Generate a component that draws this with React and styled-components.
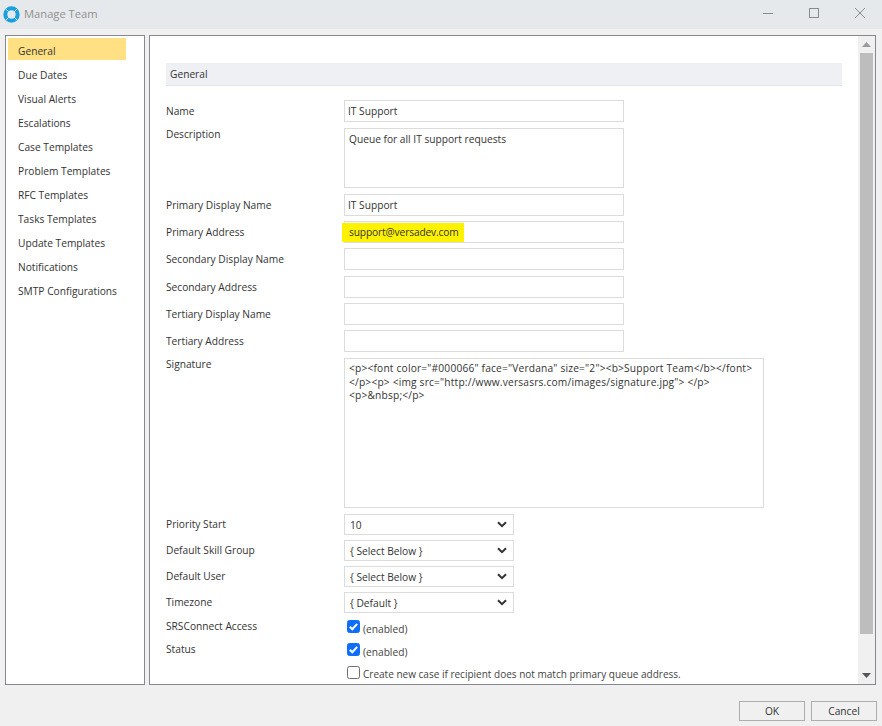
import React from "react";
import styled, { createGlobalStyle } from "styled-components";

const Global = createGlobalStyle`
  html, body { margin: 0; padding: 0; background: #f0f0f0; }
  * { box-sizing: border-box; }
`;

const Window = styled.div`
  width: 882px; height: 726px; display: flex; flex-direction: column;
  background: #f0f0f0; color: #333; overflow: hidden;
  font-family: "Open Sans", "Noto Sans", sans-serif; font-size: 10.2px;
`;
const TitleBar = styled.header`
  height: 29px; flex: none; display: flex; align-items: center; padding-left: 3px;
  background: #e6e9ec;
`;
const TitleText = styled.span`
  margin-left: 4px; color: #909090; font-size: 11.2px; flex: 1; padding-bottom: 3px;
`;
const WinButton = styled.button`
  width: 46px; height: 28px; border: 0; background: none; padding: 0 0 0 2px;
  display: flex; align-items: center; justify-content: center; margin-bottom: 3px;
`;
const Main = styled.main`
  height: 651px; flex: none; margin-top: 6px; padding: 0 6px 0 5px; display: flex; gap: 4px;
`;
const SideNav = styled.nav`
  width: 140px; flex: none; background: #fff; border: 1px solid #87878f; padding: 2px;
  display: flex; flex-direction: column; height: 650px;
`;
const NavItem = styled.div`
  width: 118px; height: 22px; flex: none; margin-bottom: 2px; padding: 2px 0 0 10px;
  line-height: 22px; white-space: nowrap;
  background: ${(p) => (p.$active ? "#ffe083" : "transparent")};
`;
const Panel = styled.section`
  flex: 1; height: 650px; display: flex; background: #fff; border: 1px solid #87878f; min-width: 0;
`;
const Form = styled.div`
  flex: 1; padding: 27px 16px 0 16px; min-width: 0; overflow: hidden;
`;
const SectionHead = styled.div`
  height: 23px; background: #eff0f4; border-bottom: 1px solid #e3e4e8;
  padding-left: 4px; line-height: 22px; margin-bottom: 14px;
`;
const Row = styled.div`
  display: grid; grid-template-columns: 178px 1fr; height: ${(p) => p.$pitch}px;
`;
const Label = styled.div`
  margin-top: ${(p) => p.$top ?? 4}px; line-height: 15px; white-space: nowrap;
`;
const Field = styled.div`
  width: ${(p) => p.$w || 280}px; height: ${(p) => p.$h || 22}px;
  border: 1px solid #dcdcdc; background: #fff; padding: ${(p) => (p.$multi ? "3px 4px" : "0 3px")};
  line-height: 20px; color: #333;
`;
const MultiText = styled.div`
  line-height: ${(p) => p.$lh}px; letter-spacing: ${(p) => p.$ls || 0}px; white-space: nowrap;
`;
const Marked = styled.span`
  display: inline-block; height: 19px; line-height: 18px; margin: 1px 0 0 -6px; padding: 0 5px 0 7px;
  background: #fff200; vertical-align: top; letter-spacing: -0.13px;
`;
const Select = styled.div`
  width: 170px; height: 21px; border: 1px solid #dcdcdc; background: #fff;
  display: flex; align-items: center; justify-content: space-between; padding: 0 6px 0 5px; color: #333;
`;
const CheckCell = styled.div`
  display: flex; align-items: flex-start; gap: 3px; padding-left: 3px; white-space: nowrap;
`;
const Box = styled.span`
  width: 13px; height: 13px; flex: none; border-radius: 2.5px;
  display: flex; align-items: center; justify-content: center;
  background: ${(p) => (p.$on ? "#0d6efd" : "#fff")};
  border: 1px solid ${(p) => (p.$on ? "#0d6efd" : "#6f6f6f")};
`;
const CheckText = styled.span`
  line-height: 15px; padding-top: ${(p) => p.$top}px; color: #444;
  font-size: ${(p) => p.$size || 10.2}px;
`;
const ScrollBar = styled.div`
  width: 17px; flex: none; background: #f0f0f0; display: flex; flex-direction: column; align-items: center;
`;
const Arrow = styled.div`
  height: 17px; flex: none; width: 100%; display: flex; align-items: center; justify-content: center;
`;
const Thumb = styled.div`
  width: 13px; height: 581px; flex: none; background: #bdbdbd;
`;
const Spacer = styled.div` flex: 1; `;
const Footer = styled.footer`
  flex: 1; display: flex; justify-content: flex-end; gap: 6px; padding: 15px 5px 0 0;
`;
const Btn = styled.button`
  width: 66px; height: 20px; background: #f0f0f0; border: 1px solid #adadad; padding: 0;
  font: inherit; color: #333; line-height: 16px;
`;

const Logo = () => (
  <svg width="17" height="17" viewBox="0 0 17 17" fill="none">
    <circle cx="8.5" cy="8.5" r="6.2" stroke="#1aa0dc" strokeWidth="4" />
    <path d="M3 3.2 6 6.2M14 3 10.8 6.2M14 14 10.8 10.8M3 14 6.2 10.8" stroke="#e6e9ec" strokeWidth="0.9" />
  </svg>
);
const Chevron = () => (
  <svg width="10" height="7" viewBox="0 0 10 7" fill="none">
    <path d="M1 1.2 5 5.2 9 1.2" stroke="#333" strokeWidth="2" />
  </svg>
);
const Tick = () => (
  <svg width="11" height="11" viewBox="0 0 11 11" fill="none">
    <path d="M1.8 5.8 4.3 8.2 9.2 2.8" stroke="#fff" strokeWidth="2" />
  </svg>
);

const nav = ["General", "Due Dates", "Visual Alerts", "Escalations", "Case Templates", "Problem Templates", "RFC Templates", "Tasks Templates", "Update Templates", "Notifications", "SMTP Configurations"];

const textRows = [
  { label: "Primary Display Name", value: "IT Support", pitch: 27 },
  { label: "Primary Address", marked: "support@versadev.com", pitch: 27 },
  { label: "Secondary Display Name", pitch: 28 },
  { label: "Secondary Address", pitch: 27 },
  { label: "Tertiary Display Name", pitch: 27 },
  { label: "Tertiary Address", pitch: 28 },
];
const selects = [
  ["Priority Start", "10"],
  ["Default Skill Group", "{ Select Below }"],
  ["Default User", "{ Select Below }"],
  ["Timezone", "{ Default }"],
];

export default function App() {
  return (
    <Window>
      <Global />
      <TitleBar>
        <Logo />
        <TitleText>Manage Team</TitleText>
        <WinButton aria-label="Minimize">
          <svg width="12" height="12" viewBox="0 0 12 12"><path d="M1 6.5h10" stroke="#8a8a8a" /></svg>
        </WinButton>
        <WinButton aria-label="Maximize">
          <svg width="12" height="12" viewBox="0 0 12 12" fill="none"><rect x="1.5" y="1.5" width="9" height="9" stroke="#8a8a8a" /></svg>
        </WinButton>
        <WinButton aria-label="Close">
          <svg width="12" height="12" viewBox="0 0 12 12"><path d="M1 1l10 10M11 1 1 11" stroke="#8a8a8a" /></svg>
        </WinButton>
      </TitleBar>
      <Main>
        <SideNav>
          {nav.map((n, i) => <NavItem key={n} $active={i === 0}>{n}</NavItem>)}
        </SideNav>
        <Panel>
          <Form>
            <SectionHead>General</SectionHead>
            <Row $pitch={28}><Label>Name</Label><Field>IT Support</Field></Row>
            <Row $pitch={66}>
              <Label $top={-1}>Description</Label>
              <Field $h={60} $multi><MultiText $lh={15}>Queue for all IT support requests</MultiText></Field>
            </Row>
            {textRows.map((r) => (
              <Row key={r.label} $pitch={r.pitch}>
                <Label>{r.label}</Label>
                <Field>{r.marked ? <Marked>{r.marked}</Marked> : r.value}</Field>
              </Row>
            ))}
            <Row $pitch={156}>
              <Label $top={-1}>Signature</Label>
              <Field $w={420} $h={150} $multi>
                <MultiText $lh={13.5} $ls={0.19}>
                  {'<p><font color="#000066" face="Verdana" size="2"><b>Support Team</b></font>'}<br />
                  {'</p><p> <img src="http://www.versasrs.com/images/signature.jpg"> </p>'}<br />
                  {'<p>&nbsp;</p>'}
                </MultiText>
              </Field>
            </Row>
            {selects.map(([l, v], i) => (
              <Row key={l} $pitch={i === 3 ? 28 : 26}>
                <Label $top={3}>{l}</Label>
                <Select>{v}<Chevron /></Select>
              </Row>
            ))}
            <Row $pitch={23}>
              <Label $top={-1}>SRSConnect Access</Label>
              <CheckCell><Box $on><Tick /></Box><CheckText $top={2}>(enabled)</CheckText></CheckCell>
            </Row>
            <Row $pitch={23}>
              <Label $top={-1}>Status</Label>
              <CheckCell><Box $on><Tick /></Box><CheckText $top={2}>(enabled)</CheckText></CheckCell>
            </Row>
            <Row $pitch={20}>
              <Label />
              <CheckCell><Box /><CheckText $top={1} $size={10.03}>Create new case if recipient does not match primary queue address.</CheckText></CheckCell>
            </Row>
          </Form>
          <ScrollBar>
            <Arrow><svg width="9" height="5" viewBox="0 0 9 5"><path d="M4.5 0 9 5H0z" fill="#9a9a9a" /></svg></Arrow>
            <Thumb />
            <Spacer />
            <Arrow><svg width="9" height="5" viewBox="0 0 9 5"><path d="M0 0h9L4.5 5z" fill="#555" /></svg></Arrow>
          </ScrollBar>
        </Panel>
      </Main>
      <Footer>
        <Btn>OK</Btn>
        <Btn>Cancel</Btn>
      </Footer>
    </Window>
  );
}
